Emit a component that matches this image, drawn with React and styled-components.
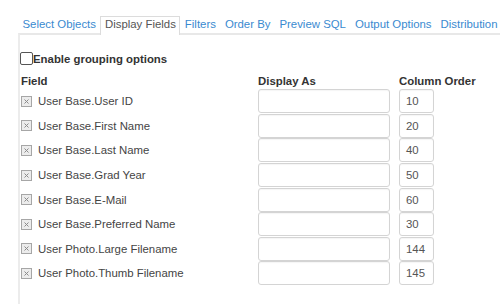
import React from "react";
import styled, { createGlobalStyle } from "styled-components";

const Global = createGlobalStyle`
  html, body { margin: 0; padding: 0; background: #fff; }
  body { font-family: "Liberation Sans", Arial, sans-serif; font-size: 11.4px; color: #333; }
`;

const Page = styled.div`
  width: 500px;
  height: 304px;
  overflow: hidden;
  padding: 16px 0 0 18px;
  box-sizing: border-box;
  display: flex;
  flex-direction: column;
`;

const Tabs = styled.div`
  display: flex;
  align-items: flex-end;
  gap: 0;
  height: 17px;
  white-space: nowrap;
`;

const Tab = styled.div`
  padding: 0 3.5px;
  box-sizing: border-box;
  line-height: 15px;
  color: ${(p) => (p.$active ? "#555" : "#3a8ad0")};
  border: 1px solid ${(p) => (p.$active ? "#dcdcdc" : "transparent")};
  border-bottom: none;
  background: #fff;
  margin-bottom: ${(p) => (p.$active ? "-2px" : "0")};
  height: ${(p) => (p.$active ? "19px" : "17px")};
  position: relative;
  z-index: 1;
`;

const Panel = styled.div`
  flex: 1;
  border-top: 2px solid #e8e8e8;
  border-left: 2px solid #ececec;
  padding: 17px 0 0 0;
`;

const GroupLabel = styled.label`
  display: flex;
  align-items: center;
  font-weight: bold;
  height: 13px;
  color: #333;
`;

const Box = styled.span`
  width: 11px;
  height: 11px;
  border: 1px solid #555;
  border-radius: 2px;
  background: #fff;
  display: inline-block;
`;

const Grid = styled.div`
  display: grid;
  grid-template-columns: 237px 141px 80px;
  margin-top: 8px;
  padding-left: 1px;
`;

const Head = styled.div`
  font-weight: bold;
  color: #333;
  height: 16px;
  line-height: 16px;
`;

const Cell = styled.div`
  height: 24.6px;
  display: flex;
  align-items: center;
`;

const FieldName = styled.span`
  margin-left: 6px;
  color: #444;
`;

const Input = styled.div`
  box-sizing: border-box;
  width: ${(p) => p.$w}px;
  height: 24px;
  border: 1px solid #d4d4d4;
  border-radius: 3px;
  background: #fff;
  padding-left: 6px;
  line-height: 22px;
  color: #555;
  box-shadow: inset 0 1px 1px rgba(0,0,0,0.04);
`;

const XIcon = () => (
  <svg width="11" height="11" viewBox="0 0 11 11">
    <rect x="0.5" y="0.5" width="10" height="10" fill="#ececec" stroke="#a6a6a6" />
    <path d="M3.5 3.5 L7.5 7.5 M7.5 3.5 L3.5 7.5" stroke="#8a8a8a" strokeWidth="1" />
  </svg>
);

const tabs = ["Select Objects", "Display Fields", "Filters", "Order By", "Preview SQL", "Output Options", "Distribution"];

const rows = [
  ["User Base.User ID", "10"],
  ["User Base.First Name", "20"],
  ["User Base.Last Name", "40"],
  ["User Base.Grad Year", "50"],
  ["User Base.E-Mail", "60"],
  ["User Base.Preferred Name", "30"],
  ["User Photo.Large Filename", "144"],
  ["User Photo.Thumb Filename", "145"],
];

export default function App() {
  return (
    <>
      <Global />
      <Page>
        <Tabs>
          {tabs.map((t) => (
            <Tab key={t} $active={t === "Display Fields"}>{t}</Tab>
          ))}
        </Tabs>
        <Panel>
          <GroupLabel>
            <Box />
            Enable grouping options
          </GroupLabel>
          <Grid>
            <Head>Field</Head>
            <Head>Display As</Head>
            <Head>Column Order</Head>
            {rows.map(([name, order]) => (
              <React.Fragment key={name}>
                <Cell>
                  <XIcon />
                  <FieldName>{name}</FieldName>
                </Cell>
                <Cell>
                  <Input $w={132} />
                </Cell>
                <Cell>
                  <Input $w={35}>{order}</Input>
                </Cell>
              </React.Fragment>
            ))}
          </Grid>
        </Panel>
      </Page>
    </>
  );
}
